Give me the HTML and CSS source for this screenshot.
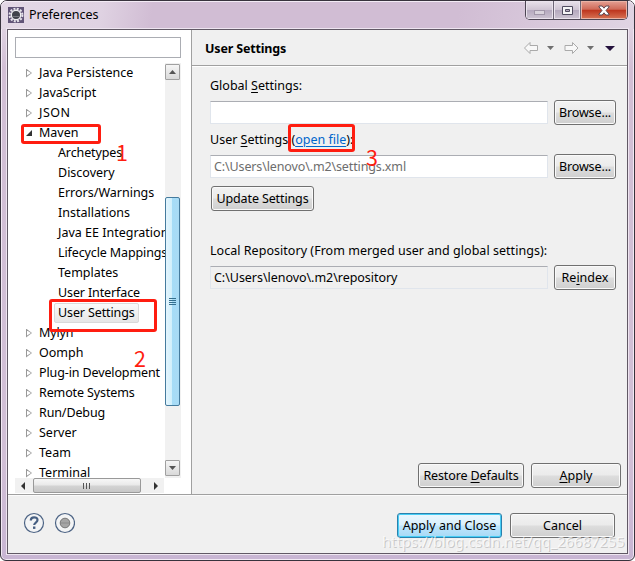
FILE: index.html
```html
<!DOCTYPE html>
<html lang="en">
<head>
<meta charset="utf-8">
<title>Preferences</title>
<link rel="stylesheet" href="styles.css">
</head>
<body>
<div class="window">
  <header class="titlebar">
    <svg class="app-icon" width="16" height="16" viewBox="0 0 16 16"><rect width="16" height="16" fill="#615477"/><circle cx="8" cy="8" r="6.4" fill="none" stroke="#e8e5ec" stroke-width="2" stroke-dasharray="2 1.35"/><circle cx="8" cy="8" r="4.7" fill="#41444b" stroke="#eeeef0" stroke-width="1.4"/><path d="M4 9.5h8" stroke="#74767d"/></svg>
    <span class="title">Preferences</span>
    <div class="controls">
      <span class="ctl min"><svg width="13" height="7" viewBox="0 0 13 7"><rect x="1.500" y="1.500" width="10" height="4" fill="#d9d3dc" stroke="#a096a8"/></svg></span>
      <span class="ctl max"><svg width="13" height="11" viewBox="0 0 13 11"><path d="M1.500 1.500h10v8h-10zM4.500 4.500h4v2h-4z" fill="#f5f4f6" stroke="#514c60" fill-rule="evenodd"/></svg></span>
      <span class="ctl close"><svg width="12" height="11" viewBox="0 0 12 11"><path d="M1 1h3.200L6 3.200 7.800 1H11v1L8 5.500l3 3.500v1H7.800L6 7.800 4.200 10H1V9l3-3.500L1 2z" fill="#fff" stroke="#5b4651"/></svg></span>
    </div>
  </header>
  <main class="client">
    <div class="upper">
      <aside class="sidebar">
        <div class="search"></div>
        <div class="browser">
          <ul class="tree">
            <li><i class="tw"></i><span>Java Persistence</span></li>
            <li><i class="tw"></i><span>JavaScript</span></li>
            <li><i class="tw"></i><span class="wide">JSON</span></li>
            <li><i class="tw open"></i><span>Maven</span></li>
            <li class="child"><span class="tight">Archetypes</span></li>
            <li class="child"><span>Discovery</span></li>
            <li class="child"><span>Errors/Warnings</span></li>
            <li class="child"><span>Installations</span></li>
            <li class="child"><span>Java EE Integration</span></li>
            <li class="child"><span class="tight">Lifecycle Mappings</span></li>
            <li class="child"><span>Templates</span></li>
            <li class="child"><span class="tight">User Interface</span></li>
            <li class="child selected"><span class="tight">User Settings</span></li>
            <li><i class="tw"></i><span class="tight">Mylyn</span></li>
            <li><i class="tw"></i><span>Oomph</span></li>
            <li><i class="tw"></i><span class="tight">Plug-in Development</span></li>
            <li><i class="tw"></i><span class="tight">Remote Systems</span></li>
            <li><i class="tw"></i><span class="tight">Run/Debug</span></li>
            <li><i class="tw"></i><span>Server</span></li>
            <li><i class="tw"></i><span>Team</span></li>
            <li><i class="tw"></i><span>Terminal</span></li>
          </ul>
          <div class="vbar">
            <span class="arrow-btn"><svg width="7" height="4" viewBox="0 0 7 4"><path d="M0 4 3.500 0 7 4z" fill="#555"/></svg></span>
            <span class="vthumb"><i></i><i></i><i></i><i></i></span>
            <span class="arrow-btn"><svg width="7" height="4" viewBox="0 0 7 4"><path d="M0 0h7L3.500 4z" fill="#555"/></svg></span>
          </div>
          <div class="hbar">
            <svg width="4" height="8" viewBox="0 0 4 8"><path d="M4 0v8L0 4z" fill="#333"/></svg>
            <span class="hthumb"><i></i><i></i><i></i></span>
            <svg width="4" height="8" viewBox="0 0 4 8"><path d="M0 0v8l4-4z" fill="#333"/></svg>
          </div>
        </div>
      </aside>
      <section class="page">
        <div class="page-head">
          <h1>User Settings</h1>
          <svg class="nav" width="94" height="14" viewBox="0 0 94 14"><path d="M1.500 7 7 1.500v3h7.500v5H7v3z" fill="#f8f8f8" stroke="#aaa" stroke-linejoin="round"/><path d="M24 5h7l-3.500 4z" fill="#707070"/><path d="M55 7l-5.500-5.500v3h-7.500v5h7.500v3z" fill="#f8f8f8" stroke="#aaa" stroke-linejoin="round"/><path d="M64 5h7l-3.500 4z" fill="#707070"/><path d="M82 5h10l-5 5z" fill="#24123d"/></svg>
        </div>
        <div class="form">
          <div class="label">Global <u>S</u>ettings:</div>
          <div class="row"><div class="field"></div><button class="btn side tight">Browse...</button></div>
          <div class="label second">User <u>S</u>ettings (<a>open file</a>):</div>
          <div class="row"><div class="field hint"><span>C:\Users\lenovo\.m2\settings.xml</span></div><button class="btn side tight">Browse...</button></div>
          <button class="btn update tight">Update Settings</button>
          <div class="label third">Local Repository (From merged user and global settings):</div>
          <div class="row"><div class="field readonly"><span>C:\Users\lenovo\.m2\repository</span></div><button class="btn side"><span>Re<u>i</u>ndex</span></button></div>
          <div class="page-actions"><button class="btn restore tight"><span>Restore <u>D</u>efaults</span></button><button class="btn apply"><span><u>A</u>pply</span></button></div>
        </div>
      </section>
    </div>
    <footer class="footer">
      <svg class="help" width="52" height="22" viewBox="0 0 52 22"><g fill="#f3f4f5" stroke="#4c6384"><circle cx="11" cy="11" r="9.500" stroke-width="1.200"/><circle cx="42" cy="11" r="9.500" stroke-width="1.200"/></g><path d="M7.800 8.400c0-4.200 6.700-4 6.700-.3 0 2.500-3.300 2.500-3.300 5" fill="none" stroke="#465f82" stroke-width="2.200"/><rect x="10" y="14.500" width="2.400" height="2.400" fill="#465f82"/><circle cx="42" cy="11" r="4.800" fill="#a5a5a5" stroke="#777"/><path d="M38 11h8" stroke="#8b8b8b"/></svg>
      <button class="btn primary">Apply and Close</button>
      <button class="btn cancel">Cancel</button>
    </footer>
  </main>
  <div class="mark m-maven"></div><div class="mark m-user"></div><div class="mark m-file"></div>
  <span class="num n1">1</span><span class="num n2">2</span><span class="num n3">3</span>
  <span class="watermark">https://blog.csdn.net/qq_26687255</span>
</div>
</body>
</html>
```
FILE: styles.css
```css
* { box-sizing: border-box; }
body { margin: 0; overflow: hidden; background: #fff; font: 12.5px/20px "Noto Sans", "Open Sans", sans-serif; color: #000; }
.tight { letter-spacing: -.12px; }
.wide { letter-spacing: .5px; }
.window { position: relative; width: 635px; height: 561px; padding: 0 6px; border: 1px solid #38333d; border-radius: 7px 7px 6px 6px; background: linear-gradient(#e8dfea 0, #d2bfd5 12%, #d1bfd6 82%, #c8b5d3); box-shadow: inset 0 0 0 1px #f2e9f4; }
.titlebar { display: flex; height: 28px; margin: 0 -6px; padding: 0 6px 0 7px; background: linear-gradient(100deg, #e3d8e5, #dfd2e2 16%, #d1bdd4 24%, #d1bdd4 72%, #e0d4e3); border-radius: 6px 6px 0 0; box-shadow: inset 0 1px #f3ebf5; }
.app-icon { margin-top: 6px; }
.title { margin: 4px 0 0 5px; }
.controls { display: flex; width: 103px; height: 19px; margin-left: auto; border: 1px solid #4c4553; border-top: 0; border-radius: 0 0 5px 5px; overflow: hidden; }
.ctl { display: flex; align-items: center; justify-content: center; width: 28px; border-right: 1px solid #6e6676; background: linear-gradient(#e9e2eb, #cfc4d3 48%, #b5a9be 52%, #cdc4d2); box-shadow: inset 0 0 0 1px #eae3ed; }
.max { width: 27px; }
.min svg { margin-top: 4px; }
.close { flex: 1; border: 0; background: linear-gradient(#e5a094, #cf6a58 46%, #bd351e 51%, #d87455); box-shadow: inset 0 0 0 1px #eab3a5; }
.client { display: flex; flex-direction: column; width: 621px; height: 525px; border: 1px solid #615965; background: #f0f0f0; box-shadow: 0 0 0 1px #eee5f0; }
.upper { display: flex; height: 465px; border-bottom: 1px solid #a0a0a0; }
.sidebar { width: 184px; padding: 7px 0 0 7px; background: #fff; border-right: 1px solid #a0a0a0; }
.search { width: 166px; height: 21px; border: 1px solid #abadb3; }
.browser { display: grid; grid-template-columns: 150px 16px; grid-template-rows: 415px 15px; margin-top: 5px; }
.tree { margin: 0; padding: 0; list-style: none; overflow: hidden; }
.tree li { display: flex; align-items: center; height: 20px; padding-left: 11px; white-space: nowrap; }
.tree li span { margin-left: 7px; }
.tree .child { padding-left: 36px; }
.tw { position: relative; flex: none; width: 6px; height: 9px; background: #999; clip-path: polygon(0 0, 6px 4.500px, 0 9px); }
.tw::after { content: ""; position: absolute; left: 1px; top: 2px; width: 4px; height: 5px; background: #fff; clip-path: polygon(0 0, 100% 50%, 0 100%); }
.tw.open { height: 6px; background: #333; clip-path: polygon(6px 0, 6px 6px, 0 6px); }
.tw.open::after { display: none; }
.tree .selected { padding-left: 39px; }
.tree .selected span { margin: 0; padding: 0 3px; line-height: 18px; border: 1px solid #d9d9d9; border-radius: 2px; background: linear-gradient(#fafafa, #e6e6e6); }
.vbar { display: flex; flex-direction: column; padding: 1px 1px 0 0; background: #f1f1f1; }
.arrow-btn { display: flex; flex: none; align-items: center; justify-content: center; height: 16px; border: 1px solid #a0a0a0; border-radius: 1px; background: linear-gradient(#f5f5f5, #d9d9d9); }
.arrow-btn:last-child { margin-top: 54px; }
.vthumb { display: flex; flex: none; flex-direction: column; align-items: center; justify-content: center; gap: 1px; height: 209px; margin-top: 117px; border: 1px solid #457b9e; border-radius: 2px; background: linear-gradient(90deg, #e4f5fd 0, #d0effc 46%, #a6dcf7 50%, #a9dbf5); }
.vthumb i { width: 7px; height: 1px; background: #356f8e; }
.hbar { display: flex; align-items: center; justify-content: space-between; width: 149px; padding: 0 6px; background: #f1f1f1; }
.hthumb { display: flex; align-items: center; justify-content: center; gap: 2px; width: 108px; height: 15px; margin-right: 6px; border: 1px solid #999; border-radius: 2px; background: linear-gradient(#f7f7f7, #e9e9e9 48%, #d4d4d4 52%, #c7c7c7); }
.hthumb i { width: 1px; height: 6px; background: #555; }
.page { flex: 1; }
.page-head { display: flex; align-items: center; height: 36px; padding: 1px 10px 0 13px; border-bottom: 1px solid #a0a0a0; box-shadow: 0 1px #fff; }
h1 { margin: 1px 0 0; font-size: 12.5px; font-weight: 700; letter-spacing: -.17px; }
.nav { margin-left: auto; }
.form { padding: 10px 0 0 18px; }
.label { height: 20px; white-space: nowrap; }
u { text-underline-offset: 2px; text-decoration-thickness: 1px; }
a { color: #0066cc; text-decoration: underline; text-decoration-thickness: 1px; text-underline-offset: 2px; }
.row { display: flex; align-items: center; height: 25px; margin-top: 4px; gap: 6px; }
.field { display: flex; align-items: center; width: 338px; height: 23px; padding-left: 3px; border: 1px solid #e0e5ec; border-top-color: #abadb3; background: #fff; white-space: nowrap; }
.hint { color: #6d6d6d; letter-spacing: -.13px; }
.readonly { background: #f0f0f0; letter-spacing: -.04px; }
.second { margin-top: 5px; }
.third { margin-top: 30px; letter-spacing: .035px; }
.btn { display: flex; align-items: center; justify-content: center; height: 25px; padding: 0; font-family: inherit; font-size: inherit; line-height: inherit; color: #000; white-space: nowrap; border: 1px solid #707070; border-radius: 3px; background: linear-gradient(#f2f2f2, #ebebeb 48%, #dddddd 52%, #cfcfcf); box-shadow: inset 0 0 0 1px #fafafa; }
.side { width: 62px; }
.update { width: 103px; margin: 7px 0 0 1px; }
.page-actions { display: flex; gap: 7px; margin: 173px 0 0 208px; }
.restore { width: 106px; }
.apply { width: 90px; }
.footer { display: flex; flex: 1; padding: 17px 12px 0 15px; border-top: 1px solid #fbfbfb; }
.help { margin-top: -1px; }
.primary { width: 105px; margin-left: auto; border-color: #2a81ad; background: linear-gradient(#eaf6fd, #d9f0fc 48%, #bee6fd 52%, #a7d9f5); box-shadow: inset 0 0 0 1px #46cdf5; }
.cancel { width: 105px; margin-left: 8px; }
.mark { position: absolute; border: 3px solid #ff1d10; border-radius: 3px; }
.m-maven { left: 20px; top: 123px; width: 80px; height: 20px; }
.m-user { left: 48px; top: 298px; width: 108px; height: 33px; }
.m-file { left: 287px; top: 123px; width: 67px; height: 28px; }
.num { position: absolute; color: #ff1d10; font: 21.5px/24px "Noto Sans CJK SC", sans-serif; }
.n1 { left: 115px; top: 139px; }
.n2 { left: 133px; top: 345px; }
.n3 { left: 365px; top: 144px; }
.watermark { position: absolute; left: 381px; top: 530px; font-size: 14.5px; letter-spacing: .13px; white-space: nowrap; color: rgba(255,255,255,.65); text-shadow: 1px 1px rgba(100,100,100,.3); }
```
